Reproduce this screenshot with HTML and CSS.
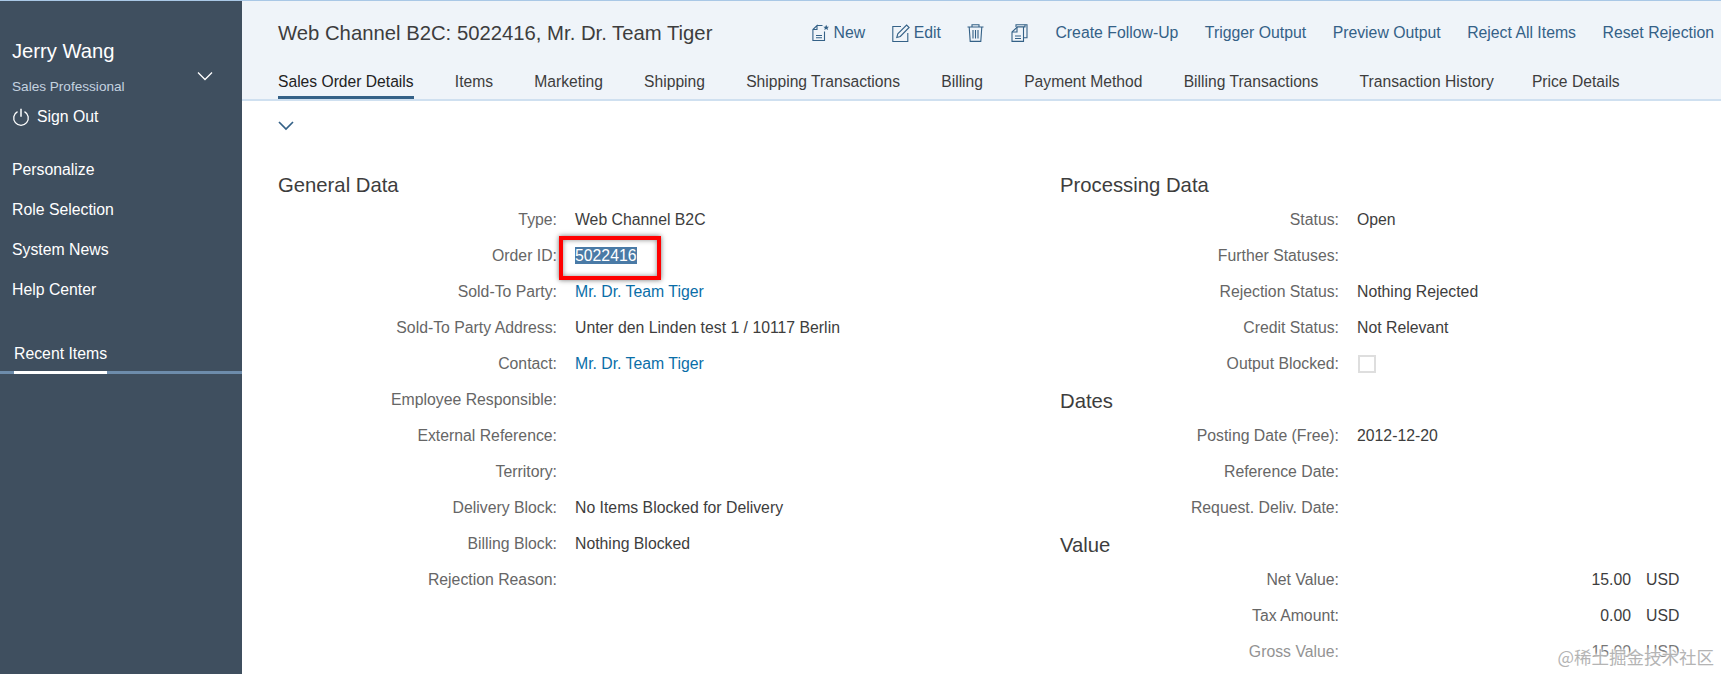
FILE: index.html
```html
<!DOCTYPE html>
<html lang="en">
<head>
    <meta charset="UTF-8">
    <meta name="viewport" content="width=device-width, initial-scale=1.0">
    <title>Sales Order 5022416</title>
    <link rel="stylesheet" href="styles.css">
</head>
<body>
    <aside class="sidebar">
        <div class="user-name">Jerry Wang</div>
        <div class="user-role-row">
            <span class="user-role">Sales Professional</span>
            <svg class="user-toggle" width="16" height="10" viewBox="0 0 16 10" fill="none"><path d="M1 1.5l7 7 7-7" stroke="#fff" stroke-width="1.3"/></svg>
        </div>
        <div class="sign-out">
            <svg width="18" height="18" viewBox="0 0 18 18" fill="none"><path d="M5.5 3.6a7.3 7.3 0 1 0 7 0" stroke="#fff" stroke-width="1.3"/><path d="M9 .8v8" stroke="#fff" stroke-width="1.5"/></svg>
            <span>Sign Out</span>
        </div>
        <nav class="side-nav">
            <a>Personalize</a>
            <a>Role Selection</a>
            <a>System News</a>
            <a>Help Center</a>
        </nav>
        <div class="recent-tab"><span>Recent Items</span></div>
    </aside>

    <main class="main">
        <header class="page-header">
            <div class="title-row">
                <h1>Web Channel B2C: 5022416, Mr. Dr. Team Tiger</h1>
                <div class="actions">
                    <a class="action">
                        <svg width="18" height="18" viewBox="0 0 18 18" fill="none" stroke="#346187" stroke-width="1.1"><path d="M5 1.500h5.500M12.500 7.500v9H.9V5.500L5 1.500v4H.9"/><path d="M4 11.500h6M4 13.700h6"/><path d="M14.200.8l.9 2h2l-1.600 1.300.6 2-1.900-1.200-1.900 1.200.6-2-1.600-1.300h2z" fill="#346187" stroke="none"/></svg>
                        New
                    </a>
                    <a class="action">
                        <svg width="18" height="18" viewBox="0 0 18 18" fill="none" stroke="#346187" stroke-width="1.1"><path d="M9 2.500H.8v15h15V9"/><path d="M4.800 13.500l1-3.600L14.600 1l2.500 2.500-8.800 8.900z"/></svg>
                        Edit
                    </a>
                    <a class="action icon-only">
                        <svg width="17" height="18" viewBox="0 0 17 18" fill="none" stroke="#346187" stroke-width="1.1"><path d="M.5 3h16M5 3V.7h7V3M2.200 3l1 14.400h10.600L14.800 3"/><path d="M6 6v8.500M8.500 6v8.500M11 6v8.500"/></svg>
                    </a>
                    <a class="action icon-only icon-last">
                        <svg width="17" height="18" viewBox="0 0 17 18" fill="none" stroke="#346187" stroke-width="1.1"><path d="M5 3V.7h11v13h-3"/><path d="M14 .7v2.200H6.500L1 8v9.400h11.500V2.900"/><path d="M1 8h5V3M4 12h6M4 14.500h6"/></svg>
                    </a>
                    <a class="action">Create Follow-Up</a>
                    <a class="action">Trigger Output</a>
                    <a class="action">Preview Output</a>
                    <a class="action">Reject All Items</a>
                    <a class="action">Reset Rejection</a>
                </div>
            </div>
            <div class="tabs">
                <a class="tab active">Sales Order Details</a>
                <a class="tab">Items</a>
                <a class="tab">Marketing</a>
                <a class="tab">Shipping</a>
                <a class="tab">Shipping Transactions</a>
                <a class="tab">Billing</a>
                <a class="tab">Payment Method</a>
                <a class="tab">Billing Transactions</a>
                <a class="tab">Transaction History</a>
                <a class="tab">Price Details</a>
            </div>
        </header>

        <div class="collapse-row">
            <svg width="16" height="10" viewBox="0 0 16 10" fill="none"><path d="M1 1l7 7 7-7" stroke="#346187" stroke-width="1.700"/></svg>
        </div>

        <div class="form">
            <section class="col col-left">
                <h2>General Data</h2>
                <div class="row"><label>Type:</label><span>Web Channel B2C</span></div>
                <div class="row"><label>Order ID:</label><span class="order-id"><span class="selected">5022416</span><i class="red-box"></i></span></div>
                <div class="row"><label>Sold-To Party:</label><a class="link">Mr. Dr. Team Tiger</a></div>
                <div class="row"><label>Sold-To Party Address:</label><span>Unter den Linden test 1 / 10117 Berlin</span></div>
                <div class="row"><label>Contact:</label><a class="link">Mr. Dr. Team Tiger</a></div>
                <div class="row"><label>Employee Responsible:</label></div>
                <div class="row"><label>External Reference:</label></div>
                <div class="row"><label>Territory:</label></div>
                <div class="row"><label>Delivery Block:</label><span>No Items Blocked for Delivery</span></div>
                <div class="row"><label>Billing Block:</label><span>Nothing Blocked</span></div>
                <div class="row"><label>Rejection Reason:</label></div>
            </section>
            <section class="col col-right">
                <h2>Processing Data</h2>
                <div class="row"><label>Status:</label><span>Open</span></div>
                <div class="row"><label>Further Statuses:</label></div>
                <div class="row"><label>Rejection Status:</label><span>Nothing Rejected</span></div>
                <div class="row"><label>Credit Status:</label><span>Not Relevant</span></div>
                <div class="row"><label>Output Blocked:</label><i class="checkbox"></i></div>
                <h2 class="sub">Dates</h2>
                <div class="row"><label>Posting Date (Free):</label><span>2012-12-20</span></div>
                <div class="row"><label>Reference Date:</label></div>
                <div class="row"><label>Request. Deliv. Date:</label></div>
                <h2 class="sub">Value</h2>
                <div class="row"><label>Net Value:</label><span class="amount">15.00</span><span class="currency">USD</span></div>
                <div class="row"><label>Tax Amount:</label><span class="amount">0.00</span><span class="currency">USD</span></div>
                <div class="row row-faded"><label>Gross Value:</label><span class="amount">15.00</span><span class="currency">USD</span></div>
            </section>
        </div>
    </main>

    <div class="watermark">@稀土掘金技术社区</div>
</body>
</html>
```

FILE: styles.css
```css
html, body {
    height: 100%;
}
body {
    margin: 0;
    display: flex;
    height: 674px;
    overflow: hidden;
    font-family: "Liberation Sans", Arial, sans-serif;
    font-size: 15.8px;
    background-color: #fff;
    color: #3d3d3d;
    border-top: 1px solid #a9c8e6;
    box-sizing: border-box;
}

/* left panel */
.sidebar {
    width: 242px;
    flex-shrink: 0;
    background-color: #3f4f5f;
    color: #fff;
    padding-top: 38px;
    box-sizing: border-box;
}
.user-name {
    font-size: 20.2px;
    line-height: 24px;
    margin-left: 12px;
}
.user-role-row {
    display: flex;
    justify-content: space-between;
    margin: 8px 29px 0 12px;
    height: 24px;
}
.user-role {
    font-size: 13.6px;
    line-height: 32px;
    color: #c5d3e0;
}
.sign-out {
    display: flex;
    align-items: center;
    gap: 7px;
    margin: 10px 0 0 12px;
    line-height: 24px;
}
.side-nav {
    margin-top: 21px;
}
.side-nav a {
    display: block;
    margin-left: 12px;
    line-height: 40px;
}
.recent-tab {
    margin-top: 27px;
    height: 34px;
    border-bottom: 3px solid #6d8cab;
}
.recent-tab span {
    display: inline-block;
    margin-left: 14px;
    height: 34px;
    line-height: 34px;
    border-bottom: 3px solid #fff;
}

/* header */
.main {
    flex: 1;
    min-width: 0;
}
.page-header {
    height: 100px;
    box-sizing: border-box;
    background-color: #eff4f9;
    border-bottom: 2px solid #cfe0f0;
    padding-left: 36px;
}
.title-row {
    display: flex;
    justify-content: space-between;
    align-items: center;
    height: 64px;
}
h1 {
    margin: 0;
    font-size: 20.3px;
    font-weight: normal;
}
.actions {
    display: flex;
    gap: 26.5px;
    padding-right: 7px;
}
.action {
    display: flex;
    align-items: center;
    gap: 4px;
    color: #346187;
    white-space: nowrap;
}
.action.icon-only {
    gap: 0;
}
.icon-last {
    margin-right: 1px;
}
.tabs {
    display: flex;
    gap: 41.2px;
    font-size: 15.65px;
}
.tab {
    line-height: 24px;
    height: 34px;
    box-sizing: border-box;
    padding-top: 5px;
    white-space: nowrap;
}
.tab:last-child {
    margin-left: -3px;
}
.tab.active {
    color: #222;
    border-bottom: 3px solid #346187;
}

/* form */
.collapse-row {
    height: 72px;
    padding: 16px 0 0 36px;
    box-sizing: border-box;
}
.form {
    display: flex;
}
.col-left {
    width: 782px;
    padding-left: 36px;
    box-sizing: border-box;
}
.col-right {
    flex: 1;
    padding-left: 36px;
}
h2 {
    margin: 0 0 5px;
    font-size: 20.3px;
    line-height: 24px;
    font-weight: normal;
}
h2.sub {
    margin: 7px 0 5px;
}
.row {
    display: flex;
    align-items: center;
    height: 36px;
    white-space: nowrap;
}
.row label {
    width: 279px;
    margin-right: 18px;
    text-align: right;
    color: #666;
}
.link {
    color: #0a6ea8;
}
.order-id {
    position: relative;
}
.selected {
    background-color: #4a7aa6;
    color: #fff;
}
.red-box {
    position: absolute;
    left: -16px;
    top: -11px;
    width: 102px;
    height: 44px;
    box-sizing: border-box;
    border: 4px solid #f00;
    box-shadow: 0 0 5px rgba(0, 0, 0, 0.55), inset 0 0 5px rgba(0, 0, 0, 0.45);
}
.checkbox {
    width: 18px;
    height: 18px;
    margin-left: 1px;
    box-sizing: border-box;
    border: 2px solid #dedede;
}
.amount {
    width: 274px;
    text-align: right;
}
.currency {
    margin-left: 15px;
}
.row-faded {
    opacity: 0.7;
}
.watermark {
    position: absolute;
    right: 7px;
    bottom: 6px;
    font-family: "Noto Sans CJK SC", "Liberation Sans", sans-serif;
    font-size: 17.5px;
    line-height: 22px;
    color: #b4b4b4;
    text-shadow: 0 0 3px #fff, 0 0 3px #fff, 0 0 3px #fff;
}
```
